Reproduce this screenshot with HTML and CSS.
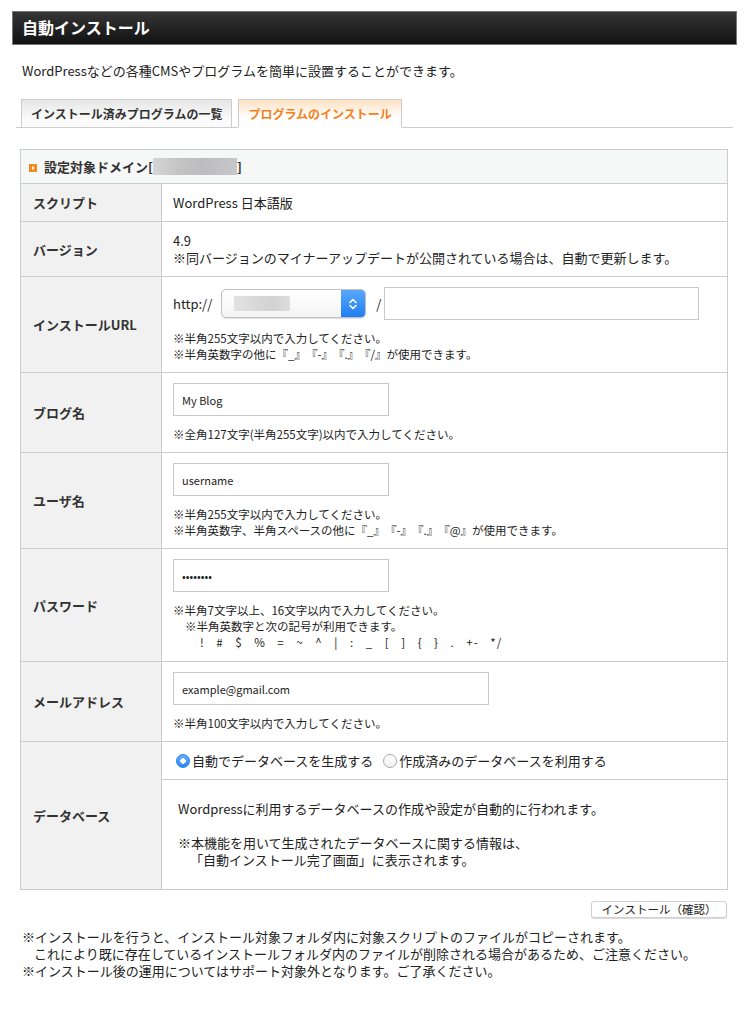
FILE: index.html
```html
<!DOCTYPE html>
<html lang="ja">

<head>
    <meta charset="UTF-8">
    <meta name="viewport" content="width=device-width, initial-scale=1.0">
    <title>自動インストール</title>
    <link rel="stylesheet" href="styles.css">
</head>

<body>
    <div class="title">自動インストール</div>
    <p class="lead">WordPressなどの各種CMSやプログラムを簡単に設置することができます。</p>

    <ul class="tabs">
        <li class="tab">インストール済みプログラムの一覧</li>
        <li class="tab active">プログラムのインストール</li>
    </ul>

    <table class="form">
        <tr>
            <th colspan="2" class="caption"><span class="mark"></span>設定対象ドメイン[<span class="blur"></span>]</th>
        </tr>
        <tr>
            <th>スクリプト</th>
            <td>WordPress 日本語版</td>
        </tr>
        <tr>
            <th>バージョン</th>
            <td>4.9<br>※同バージョンのマイナーアップデートが公開されている場合は、自動で更新します。</td>
        </tr>
        <tr>
            <th>インストールURL</th>
            <td>
                <div class="url">
                    <span>http://</span>
                    <div class="select">
                        <span class="select-blur"></span>
                        <span class="select-arrow">
                            <svg width="10" height="14" viewBox="0 0 10 14">
                                <path d="M2 5.5 L5 2.5 L8 5.5 M2 8.5 L5 11.5 L8 8.5" fill="none" stroke="#fff" stroke-width="1.6" stroke-linecap="round" stroke-linejoin="round" />
                            </svg>
                        </span>
                    </div>
                    <span class="slash">/</span>
                    <input class="text url-path" type="text">
                </div>
                <p class="note">※半角255文字以内で入力してください。<br>※半角英数字の他に『_』『-』『.』『/』が使用できます。</p>
            </td>
        </tr>
        <tr>
            <th>ブログ名</th>
            <td>
                <input class="text" type="text" value="My Blog">
                <p class="note">※全角127文字(半角255文字)以内で入力してください。</p>
            </td>
        </tr>
        <tr>
            <th>ユーザ名</th>
            <td>
                <input class="text" type="text" value="username">
                <p class="note">※半角255文字以内で入力してください。<br>※半角英数字、半角スペースの他に『_』『-』『.』『@』が使用できます。</p>
            </td>
        </tr>
        <tr>
            <th>パスワード</th>
            <td>
                <input class="text" type="password" value="password">
                <p class="note">※半角7文字以上、16文字以内で入力してください。</p>
                <p class="note-sub">※半角英数字と次の記号が利用できます。</p>
                <p class="note-symbols">! # $ % = ~ ^ | : _ [ ] { } . +- */</p>
            </td>
        </tr>
        <tr>
            <th>メールアドレス</th>
            <td>
                <input class="text wide" type="text" value="example@gmail.com">
                <p class="note">※半角100文字以内で入力してください。</p>
            </td>
        </tr>
        <tr>
            <th>データベース</th>
            <td class="db">
                <div class="db-choice">
                    <label><input type="radio" name="db" checked>自動でデータベースを生成する</label>
                    <label><input type="radio" name="db">作成済みのデータベースを利用する</label>
                </div>
                <div class="db-info">
                    Wordpressに利用するデータベースの作成や設定が自動的に行われます。<br><br>
                    ※本機能を用いて生成されたデータベースに関する情報は、<br>
                    <span class="indent">「自動インストール完了画面」に表示されます。</span>
                </div>
            </td>
        </tr>
    </table>

    <div class="actions">
        <button class="btn" type="button">インストール（確認）</button>
    </div>

    <div class="foot">
        <p>※インストールを行うと、インストール対象フォルダ内に対象スクリプトのファイルがコピーされます。</p>
        <p class="indent">これにより既に存在しているインストールフォルダ内のファイルが削除される場合があるため、ご注意ください。</p>
        <p>※インストール後の運用についてはサポート対象外となります。ご了承ください。</p>
    </div>
</body>
</html>
```

FILE: styles.css
```css
* {
    margin: 0;
    padding: 0;
    box-sizing: border-box;
}
body {
    font-family: "Noto Sans CJK JP", "Noto Sans", sans-serif;
    font-size: 13px;
    color: #222;
    background-color: #fff;
    text-spacing-trim: space-all;
}
.title {
    margin: 11px 8px 0 12px;
    height: 34px;
    padding-left: 9px;
    border: 1px solid #777;
    background: linear-gradient(#353535, #121212);
    color: #fff;
    font-size: 16px;
    font-weight: bold;
    line-height: 31px;
}
.lead {
    margin: 17px 0 0 22px;
    line-height: 17px;
}
.tabs {
    list-style: none;
    display: flex;
    gap: 6px;
    margin: 20px 12px 0 16px;
    padding-left: 5px;
    border-bottom: 1px solid #ccc;
}
.tab {
    height: 29px;
    margin-bottom: -1px;
    padding: 0 9px;
    border: 1px solid #ccc;
    background: linear-gradient(#e6e6e6, #fbfbfb 70%);
    color: #333;
    font-size: 12px;
    font-weight: bold;
    line-height: 28px;
}
.tab.active {
    border-bottom: 1px solid #fff;
    background: linear-gradient(#fde1c1, #fff 65%);
    color: #f5801e;
}
.form {
    width: 708px;
    margin: 21px 0 0 20px;
    border-collapse: collapse;
    border: 1px solid #ccc;
}
.form th,
.form td {
    border: 1px solid #ccc;
    line-height: 17px;
    text-align: left;
}
.form th {
    width: 141px;
    padding: 10px 12px;
    background-color: #f1f1f1;
    color: #333;
    font-weight: bold;
}
.form td {
    padding: 10px 11px;
}
.form .caption {
    width: auto;
    height: 34px;
    padding: 0 8px;
    background-color: #f6f7f7;
}
.mark {
    display: inline-block;
    position: relative;
    width: 8px;
    height: 8px;
    margin-right: 7px;
    vertical-align: 0;
    background-color: #f28a1d;
}
.mark::after {
    content: "";
    position: absolute;
    left: 3px;
    top: 2px;
    border-left: 3px solid #fff;
    border-top: 2px solid transparent;
    border-bottom: 2px solid transparent;
}
.blur {
    display: inline-block;
    width: 84px;
    height: 17px;
    vertical-align: -3px;
    background: linear-gradient(90deg, #d6d6d6, #c4c4c4 30%, #bdbdc0 60%, #c8c8ca);
}
.text {
    display: block;
    width: 216px;
    height: 33px;
    padding: 0 8px;
    border: 1px solid #c8c8c8;
    font-family: inherit;
    font-size: 11px;
    color: #222;
}
.text.wide {
    width: 316px;
}
.url {
    display: flex;
    align-items: center;
}
.select {
    display: flex;
    justify-content: space-between;
    width: 145px;
    height: 29px;
    margin-left: 9px;
    border: 1px solid #c0c0c0;
    border-radius: 5px;
    background: linear-gradient(#fff, #f4f4f4);
    box-shadow: 0 1px 1px rgba(0, 0, 0, 0.12);
    overflow: hidden;
}
.select-blur {
    width: 56px;
    height: 15px;
    margin: 6px 0 0 12px;
    background: linear-gradient(90deg, #e2e2e2, #d8d8d8 40%, #d2d2d4 70%, #dedede);
}
.select-arrow {
    display: flex;
    align-items: center;
    justify-content: center;
    width: 24px;
    background: linear-gradient(#5aa8fb, #1f7ef3);
}
.slash {
    margin-left: 10px;
}
.text.url-path {
    width: 315px;
    margin-left: 3px;
}
.note,
.note-sub,
.note-symbols {
    font-size: 11.5px;
    line-height: 16px;
}
.note {
    margin-top: 10px;
}
.note-sub {
    padding-left: 12px;
}
.note-symbols {
    padding-left: 27px;
    line-height: 17px;
    word-spacing: 8px;
    letter-spacing: 1px;
}
.form td.db {
    padding: 0;
}
.db-choice {
    display: flex;
    align-items: center;
    gap: 10px;
    height: 38px;
    padding-left: 14px;
    border-bottom: 1px solid #ccc;
}
.db-choice label {
    display: flex;
    align-items: center;
}
.db-choice input {
    appearance: none;
    width: 14px;
    height: 14px;
    margin-right: 2px;
    border: 1px solid #aaa;
    border-radius: 50%;
    background: linear-gradient(#fff, #f0f0f0);
}
.db-choice input:checked {
    border-color: #2d86ef;
    background: radial-gradient(circle, #fff 2.5px, transparent 3px), linear-gradient(#66b0fb, #2d84f1);
}
.db-info {
    padding: 20px 16px 21px;
    line-height: 17px;
}
.indent {
    padding-left: 12px;
}
.actions {
    display: flex;
    justify-content: flex-end;
    margin: 11px 18px 0 0;
}
.btn {
    width: 136px;
    height: 17px;
    border: 1px solid #cfcfcf;
    border-radius: 3px;
    background-color: #fff;
    box-shadow: 0 1px 1px rgba(0, 0, 0, 0.15);
    font-family: inherit;
    font-size: 11.5px;
    line-height: 15px;
    color: #222;
}
.foot {
    margin: 10px 0 0 22px;
    line-height: 17px;
}
```
